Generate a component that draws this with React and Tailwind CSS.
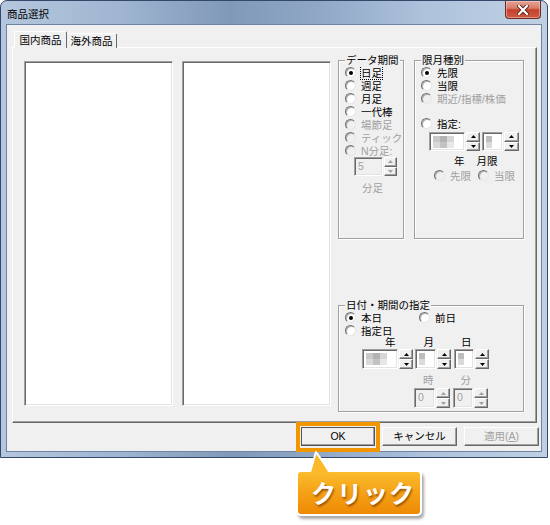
import React from 'react';

// 商品選択ダイアログ（クラシック表示）
const raised =
  'border border-t-white border-l-white border-r-[#696969] border-b-[#696969] shadow-[inset_-1px_-1px_0_#a0a0a0] bg-[#f0f0f0]';
const sunken =
  'border border-t-[#a0a0a0] border-l-[#a0a0a0] border-r-white border-b-white shadow-[inset_1px_1px_0_#696969,inset_-1px_-1px_0_#e3e3e3]';

const Radio = ({ checked, disabled }) => (
  <span
    className={`flex h-[11px] w-[11px] shrink-0 items-center justify-center rounded-full border border-t-[#707070] border-l-[#707070] border-r-[#e6e6e6] border-b-[#e6e6e6] shadow-[inset_1px_1px_0_#b0b0b0] ${
      disabled ? 'bg-[#f0f0f0]' : 'bg-white'
    }`}
  >
    {checked && <span className="h-[4px] w-[4px] rounded-full bg-black" />}
  </span>
);

const Opt = ({ label, checked, disabled, focus, className = '' }) => (
  <div className={`flex h-[13px] items-center ${className}`}>
    <Radio checked={checked} disabled={disabled} />
    <span
      className={`ml-[5px] whitespace-nowrap leading-[12px] ${disabled ? 'text-[#a0a0a0]' : 'text-black'} ${
        focus ? 'outline outline-1 outline-dotted outline-black' : ''
      }`}
    >
      {label}
    </span>
  </div>
);

const Arrow = ({ up, disabled }) => (
  <svg width="5" height="3" viewBox="0 0 5 3">
    <path d={up ? 'M0 3 L2.5 0 L5 3Z' : 'M0 0 L2.5 3 L5 0Z'} fill={disabled ? '#a0a0a0' : '#000'} />
  </svg>
);

const Spin = ({ w, disabled }) => (
  <div className={`ml-[1px] flex flex-col ${w}`}>
    <div className={`flex flex-1 items-center justify-center ${raised}`}>
      <Arrow up disabled={disabled} />
    </div>
    <div className={`flex flex-1 items-center justify-center ${raised}`}>
      <Arrow disabled={disabled} />
    </div>
  </div>
);

const Field = ({ w, className = '', value, disabled, children }) => (
  <div
    className={`flex items-start pl-[3px] pt-[2px] leading-[12px] ${w} ${sunken} ${
      disabled ? 'bg-[#f0f0f0] text-[#a0a0a0]' : 'bg-white'
    } ${className}`}
  >
    {value}
    {children}
  </div>
);

// 値はモザイクで隠されている
const MosaicWide = () => (
  <div className="mt-[1px] grid grid-cols-3">
    <span className="h-[6px] w-[7px] bg-[#c9c9c9]" />
    <span className="h-[6px] w-[7px] bg-[#b3b3b3]" />
    <span className="h-[6px] w-[7px] bg-[#d6d6d6]" />
    <span className="h-[6px] w-[7px] bg-[#d9d9d9]" />
    <span className="h-[6px] w-[7px] bg-[#c2c2c2]" />
    <span className="h-[6px] w-[7px] bg-[#e8e8e8]" />
  </div>
);

const MosaicNarrow = () => (
  <div className="mt-[1px] flex flex-col">
    <span className="h-[6px] w-[6px] bg-[#bdbdbd]" />
    <span className="h-[6px] w-[6px] bg-[#dadada]" />
  </div>
);

const GroupBox = ({ label, className = '', children }) => (
  <div className={`relative border border-[#a0a0a0] shadow-[inset_1px_1px_0_#fff,1px_1px_0_#fff] ${className}`}>
    <span className="absolute -top-[7px] left-[6px] whitespace-nowrap bg-[#f0f0f0] px-[1px] leading-[13px]">{label}</span>
    {children}
  </div>
);

const Button = ({ label, w, primary, disabled }) => (
  <div
    className={`flex h-[19px] items-center justify-center ${w} ${raised} ${
      primary ? 'outline outline-1 outline-[#555555] -outline-offset-1' : ''
    } ${disabled ? 'text-[#a0a0a0]' : 'text-black'}`}
  >
    {label}
  </div>
);

export default function App() {
  return (
    <div className="relative h-[525px] w-[550px] overflow-hidden bg-white font-['Liberation_Sans','Noto_Sans_CJK_JP',sans-serif] text-[10.5px] text-black">
      {/* ウィンドウ枠 */}
      <div className="flex h-[458px] w-[548px] flex-col rounded-t-[7px] border border-[#34496a] bg-[linear-gradient(90deg,#b4c7de_0%,#9fb5d0_22%,#8099b8_42%,#90a8c6_58%,#aec3dc_78%,#bfd0e4_100%)]">
        <div className="flex h-[23px] shrink-0 items-start">
          <span className="ml-[6px] mt-[7px] leading-[13px]">商品選択</span>
          <div className="ml-auto mr-[6px] flex h-[18px] w-[36px] items-center justify-center rounded-b-[4px] border border-t-0 border-[#6e2a21] bg-[linear-gradient(180deg,#e6a396_0%,#d97c69_42%,#c5412c_52%,#cc5a43_100%)] shadow-[inset_0_0_0_1px_rgba(255,220,210,0.45)]">
            <svg width="12" height="10" viewBox="0 0 12 10">
              <path d="M2 1 L10 9 M10 1 L2 9" stroke="#5a1d14" strokeWidth="4" strokeLinecap="square" />
              <path d="M2 1 L10 9 M10 1 L2 9" stroke="#ffffff" strokeWidth="2.2" strokeLinecap="square" />
            </svg>
          </div>
        </div>

        {/* クライアント領域 */}
        <div className="mx-[5px] mb-[5px] flex flex-1 flex-col border border-[#6f84a1] bg-[#f0f0f0] pl-[5px] pt-[6px]">
          <div className="relative z-10 -mb-px ml-[2px] flex h-[17px] items-end">
            <div className="flex h-[17px] w-[53px] justify-center rounded-t-[2px] border-l border-r border-t border-l-white border-t-white border-r-[#696969] bg-[#f0f0f0] pt-[2px] leading-[13px]">
              国内商品
            </div>
            <div className="flex h-[15px] w-[50px] justify-center rounded-t-[2px] border-r border-t border-t-white border-r-[#696969] bg-[#f0f0f0] pt-[1px] leading-[13px]">
              海外商品
            </div>
          </div>

          <div className="flex h-[376px] w-[525px] items-start border border-b-[#696969] border-l-white border-r-[#696969] border-t-white pl-[11px] pt-[13px] shadow-[inset_-1px_-1px_0_#a0a0a0]">
            <div className={`h-[345px] w-[149px] bg-white ${sunken}`} />
            <div className={`ml-[9px] h-[345px] w-[149px] bg-white ${sunken}`} />

            <div className="-mt-px ml-[7px] flex w-[186px] flex-col">
              <div className="flex gap-[10px]">
                <GroupBox label="データ期間" className="h-[179px] w-[66px]">
                  <div className="flex flex-col pl-[6px] pt-[5px]">
                    <Opt label="日足" checked focus />
                    <Opt label="週足" />
                    <Opt label="月足" />
                    <Opt label="一代棒" />
                    <Opt label="場節足" disabled />
                    <Opt label="ティック" disabled />
                    <Opt label="N分足:" disabled />
                    <div className="ml-[9px] flex h-[19px]">
                      <Field w="w-[29px]" value="5" disabled />
                      <Spin w="w-[13px]" disabled />
                    </div>
                    <span className="ml-[17px] mt-[6px] leading-[13px] text-[#a0a0a0]">分足</span>
                  </div>
                </GroupBox>

                <GroupBox label="限月種別" className="h-[179px] w-[110px]">
                  <div className="flex flex-col pl-[6px] pt-[5px]">
                    <Opt label="先限" checked />
                    <Opt label="当限" />
                    <Opt label="期近/指標/株価" disabled />
                    <Opt label="指定:" className="mt-[12px]" />
                    <div className="ml-[8px] mt-[2px] flex h-[19px]">
                      <Field w="w-[36px]">
                        <MosaicWide />
                      </Field>
                      <Spin w="w-[14px]" />
                      <Field w="w-[21px]" className="ml-[2px]">
                        <MosaicNarrow />
                      </Field>
                      <Spin w="w-[15px]" />
                    </div>
                    <div className="mt-[4px] flex h-[13px] items-center leading-[13px]">
                      <span className="ml-[33px]">年</span>
                      <span className="ml-[12px]">月限</span>
                    </div>
                    <div className="mt-[1px] flex">
                      <Opt label="先限" disabled className="ml-[13px]" />
                      <Opt label="当限" disabled className="ml-[7px]" />
                    </div>
                  </div>
                </GroupBox>
              </div>

              <GroupBox label="日付・期間の指定" className="mt-[66px] h-[107px] w-[186px]">
                <div className="flex flex-col pl-[6px] pt-[5px]">
                  <div className="flex">
                    <Opt label="本日" checked />
                    <Opt label="前日" className="ml-[37px]" />
                  </div>
                  <Opt label="指定日" />
                  <div className="flex h-[11px] items-center leading-[11px]">
                    <span className="ml-[40px]">年</span>
                    <span className="ml-[28px]">月</span>
                    <span className="ml-[27px]">日</span>
                  </div>
                  <div className="ml-[17px] mt-[1px] flex h-[20px]">
                    <Field w="w-[36px]">
                      <MosaicWide />
                    </Field>
                    <Spin w="w-[14px]" />
                    <Field w="w-[21px]" className="ml-[2px]">
                      <MosaicNarrow />
                    </Field>
                    <Spin w="w-[14px]" />
                    <Field w="w-[20px]" className="ml-[3px]">
                      <MosaicNarrow />
                    </Field>
                    <Spin w="w-[14px]" />
                  </div>
                  <div className="mt-[5px] flex h-[12px] items-center leading-[12px] text-[#a0a0a0]">
                    <span className="ml-[78px]">時</span>
                    <span className="ml-[27px]">分</span>
                  </div>
                  <div className="ml-[69px] mt-[2px] flex h-[20px]">
                    <Field w="w-[21px]" value="0" disabled />
                    <Spin w="w-[14px]" disabled />
                    <Field w="w-[20px]" className="ml-[3px]" value="0" disabled />
                    <Spin w="w-[14px]" disabled />
                  </div>
                </div>
              </GroupBox>
            </div>
          </div>

          <div className="mt-[4px] flex justify-end gap-[7px] pr-[2px]">
            <Button label="OK" w="w-[74px]" primary />
            <Button label="キャンセル" w="w-[75px]" />
            <Button
              label={
                <span>
                  適用(<span className="underline">A</span>)
                </span>
              }
              w="w-[75px]"
              disabled
            />
          </div>
        </div>
      </div>

      {/* 注釈：OKボタンの枠と吹き出し */}
      <div className="absolute left-[296px] top-[422px] h-[30px] w-[84px] border-[4px] border-[#f29600]" />
      <div className="absolute left-[296px] top-[470px] flex h-[46px] w-[126px] items-center rounded-[5px] border-2 border-white bg-[linear-gradient(180deg,#fbbc2d_0%,#f5a116_50%,#ee8a05_100%)] pb-[3px] pl-[13px] shadow-[2px_3px_3px_rgba(0,0,0,0.35)]">
        <span className="font-['Noto_Sans_CJK_JP',sans-serif] text-[25px] font-bold leading-[30px] tracking-[1px] text-white [text-shadow:1px_2px_2px_rgba(110,50,0,0.65)]">
          クリック
        </span>
      </div>
      <svg className="absolute left-[306px] top-[450px]" width="28" height="26" viewBox="0 0 28 26">
        <path d="M4 25 L10 2 L24 25 Z" fill="#fbb92a" />
        <path d="M4 22 L10 2 L24 22" fill="none" stroke="#ffffff" strokeWidth="2" strokeLinejoin="round" />
      </svg>
    </div>
  );
}
